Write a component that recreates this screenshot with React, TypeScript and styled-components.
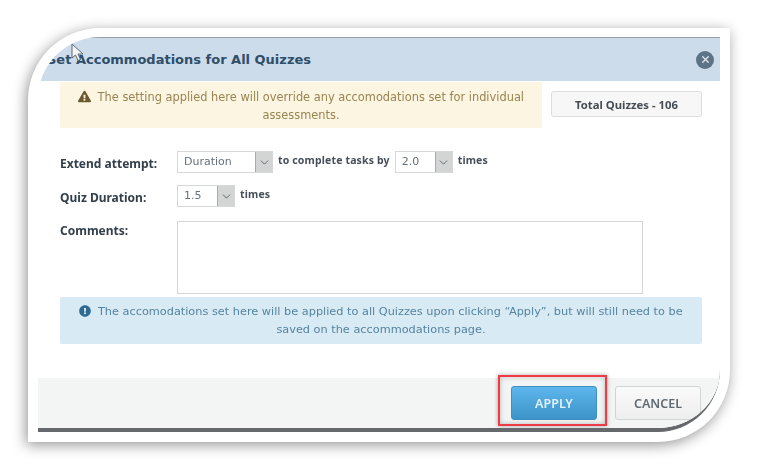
import styled, { createGlobalStyle } from 'styled-components';
import { ChevronDown, X } from 'lucide-react';
import { FaExclamationCircle, FaExclamationTriangle } from 'react-icons/fa';

const GlobalStyle = createGlobalStyle`
  html, body {
    margin: 0;
    background: #fff;
    font-family: 'DejaVu Sans', Verdana, sans-serif;
  }
`;

function Select({ value, width }: { value: string; width: number }) {
  return (
    <UISelect $width={width}>
      <UISelectValue>{value}</UISelectValue>
      <UISelectArrow>
        <ChevronDown size={13} strokeWidth={1.6} />
      </UISelectArrow>
    </UISelect>
  );
}

export default function App() {
  return (
    <UIPage>
      <GlobalStyle />
      <UIFrame>
        <UIDialog>
          <UIHeader>
            <UITitle>Set Accommodations for All Quizzes</UITitle>
            <UIClose>
              <X size={11} strokeWidth={3} />
            </UIClose>
          </UIHeader>
          <UIBody>
            <UITopRow>
              <UIWarning>
                <FaExclamationTriangle size={13} color="#6b5a30" />{' '}
                The setting applied here will override any accomodations set for individual assessments.
              </UIWarning>
              <UITotal>Total Quizzes - 106</UITotal>
            </UITopRow>
            <UIForm>
              <UILabel>Extend attempt:</UILabel>
              <UIControls>
                <Select value="Duration" width={96} />
                <UIHint>to complete tasks by</UIHint>
                <Select value="2.0" width={58} />
                <UIHint>times</UIHint>
              </UIControls>
              <UILabel>Quiz Duration:</UILabel>
              <UIControls>
                <Select value="1.5" width={58} />
                <UIHint>times</UIHint>
              </UIControls>
              <UICommentsLabel>Comments:</UICommentsLabel>
              <UIComments />
            </UIForm>
            <UIInfo>
              <FaExclamationCircle size={12} color="#2f6a94" />{' '}
              The accomodations set here will be applied to all Quizzes upon clicking “Apply”, but will still need to be saved on the accommodations page.
            </UIInfo>
          </UIBody>
          <UIFooter>
            <UIApplyHolder>
              <UIHighlight />
              <UIApply>APPLY</UIApply>
            </UIApplyHolder>
            <UICancel>CANCEL</UICancel>
          </UIFooter>
        </UIDialog>
        <UICursor width="14" height="19" viewBox="0 0 14 19">
          <path
            d="M1 1 L1 15 L4.5 12 L7 17.5 L9.5 16.5 L7 11 L12 11 Z"
            fill="#f4f6f8"
            stroke="#5d6670"
            strokeWidth="1"
          />
        </UICursor>
      </UIFrame>
    </UIPage>
  );
}

const UIPage = styled.div`
  width: 759px;
  height: 470px;
  padding: 28px 29px 28px 28px;
  box-sizing: border-box;
  overflow: hidden;
`;

const UIFrame = styled.div`
  position: relative;
  box-sizing: border-box;
  width: 702px;
  height: 414px;
  padding: 9px 10px;
  background: #fff;
  border-radius: 72px 0 72px 0;
  box-shadow: -2px 3px 14px rgba(0, 0, 0, 0.42);
`;

const UIDialog = styled.div`
  display: flex;
  flex-direction: column;
  box-sizing: border-box;
  height: 395px;
  overflow: hidden;
  background: #fff;
  border-bottom: 4px solid #66696b;
  border-radius: 62px 0 62px 0;
  filter: blur(0.55px);
`;

const UIHeader = styled.div`
  display: flex;
  align-items: center;
  justify-content: space-between;
  box-sizing: border-box;
  height: 44px;
  flex-shrink: 0;
  padding: 0 6px 0 9px;
  background: #cddcea;
  border-top: 1px solid #9a9ea3;
`;

const UITitle = styled.div`
  font-size: 13px;
  font-weight: bold;
  color: #2f4e6a;
`;

const UIClose = styled.div`
  display: flex;
  align-items: center;
  justify-content: center;
  width: 18px;
  height: 18px;
  border-radius: 50%;
  color: #dfe6ec;
  background: #5d7386;
`;

const UIBody = styled.div`
  flex: 1;
  padding: 1px 18px 0 22px;
`;

const UITopRow = styled.div`
  display: flex;
  align-items: flex-start;
  gap: 9px;
`;

const UIWarning = styled.div`
  box-sizing: border-box;
  width: 482px;
  height: 46px;
  padding: 6px 16px;
  font-size: 11.4px;
  line-height: 18px;
  text-align: center;
  color: #9a8452;
  background: #fbf5e1;
  border-radius: 2px;

  svg {
    vertical-align: -2px;
    margin-right: 3px;
  }
`;

const UITotal = styled.div`
  display: flex;
  align-items: center;
  justify-content: center;
  box-sizing: border-box;
  width: 151px;
  height: 26px;
  margin-top: 9px;
  font-family: 'Noto Sans', sans-serif;
  font-size: 11.3px;
  font-weight: bold;
  color: #444c54;
  background: #f7f7f7;
  border: 1px solid #dcdddd;
  border-radius: 3px;
`;

const UIForm = styled.div`
  display: grid;
  grid-template-columns: 117px 1fr;
  row-gap: 12px;
  align-items: center;
  margin-top: 23px;
`;

const UILabel = styled.div`
  position: relative;
  top: 1px;
  font-family: 'Noto Sans', sans-serif;
  font-size: 12px;
  font-weight: bold;
  color: #33404c;
`;

const UICommentsLabel = styled(UILabel)`
  align-self: start;
  margin-top: 2px;
`;

const UIControls = styled.div`
  display: flex;
  align-items: flex-start;
  gap: 5px;
  height: 22px;
`;

const UIHint = styled.span`
  font-family: 'Noto Sans', sans-serif;
  font-size: 10.5px;
  font-weight: bold;
  letter-spacing: 0.15px;
  line-height: 18px;
  color: #46505a;
`;

const UISelect = styled.div<{ $width: number }>`
  display: flex;
  box-sizing: border-box;
  width: ${p => p.$width}px;
  height: 22px;
  background: #fff;
  border: 1px solid #d6d8d8;
`;

const UISelectValue = styled.div`
  flex: 1;
  padding-left: 6px;
  font-size: 11px;
  line-height: 20px;
  color: #66717a;
`;

const UISelectArrow = styled.div`
  display: flex;
  align-items: center;
  justify-content: center;
  width: 16px;
  color: #4f5962;
  background: #d3d5d5;
  border-left: 1px solid #a8abab;
`;

const UIComments = styled.div`
  box-sizing: border-box;
  width: 466px;
  height: 73px;
  margin-top: 2px;
  background: #fff;
  border: 1px solid #d6d6d6;
`;

const UIInfo = styled.div`
  box-sizing: border-box;
  width: 642px;
  height: 47px;
  margin-top: 3px;
  padding: 6px 8px;
  font-size: 11.3px;
  line-height: 18px;
  text-align: center;
  color: #55849f;
  background: #d8ebf5;
  border-radius: 2px;

  svg {
    vertical-align: -2px;
    margin-right: 3px;
  }
`;

const UIFooter = styled.div`
  display: flex;
  align-items: flex-start;
  gap: 18px;
  box-sizing: border-box;
  height: 50px;
  flex-shrink: 0;
  padding: 8px 19px 0 0;
  justify-content: flex-end;
  background: #f3f5f5;
`;

const UIApplyHolder = styled.div`
  position: relative;
`;

const UIHighlight = styled.div`
  position: absolute;
  top: -11px;
  left: -13px;
  width: 109px;
  height: 51px;
  box-sizing: border-box;
  border: 2.5px solid #ee3b45;
  box-shadow: 0 0 4px rgba(0, 0, 0, 0.35), inset 0 0 5px rgba(0, 0, 0, 0.25);
`;

const UIApply = styled.div`
  display: flex;
  align-items: center;
  justify-content: center;
  box-sizing: border-box;
  width: 86px;
  height: 34px;
  font-family: 'Noto Sans', sans-serif;
  font-size: 12.5px;
  font-weight: 600;
  color: #e3f1fa;
  background: linear-gradient(#5db6ec, #3c93c8);
  border: 1px solid #3f8fc0;
  border-radius: 3px;
`;

const UICancel = styled.div`
  display: flex;
  align-items: center;
  justify-content: center;
  box-sizing: border-box;
  width: 86px;
  height: 34px;
  font-family: 'Noto Sans', sans-serif;
  font-size: 12.5px;
  font-weight: 600;
  color: #5f6a72;
  background: linear-gradient(#fafafa, #eeeeee);
  border: 1px solid #d3d5d5;
  border-radius: 3px;
`;

const UICursor = styled.svg`
  position: absolute;
  top: 15px;
  left: 43px;
`;
